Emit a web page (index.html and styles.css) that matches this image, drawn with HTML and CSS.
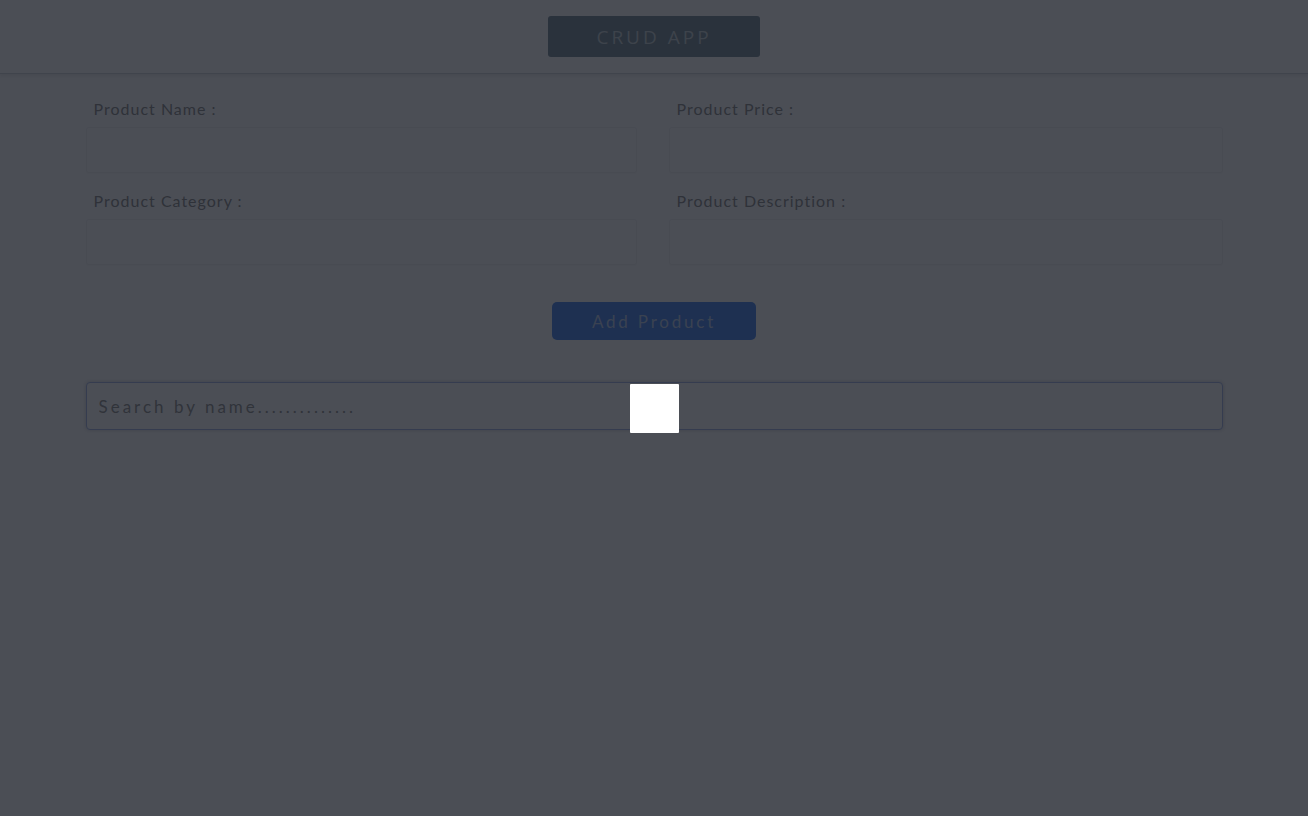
FILE: index.html
```html
<!DOCTYPE html>
<html lang="en">
<head>
<meta charset="utf-8">
<title>CRUD APP</title>
<link rel="stylesheet" href="styles.css">
</head>
<body>
<header class="topbar">
  <div class="brand">CRUD APP</div>
</header>
<main class="container">
  <form class="product-form">
    <div class="field">
      <label class="field-label">Product Name :</label>
      <input class="field-input" type="text">
    </div>
    <div class="field">
      <label class="field-label">Product Price :</label>
      <input class="field-input" type="text">
    </div>
    <div class="field">
      <label class="field-label">Product Category :</label>
      <input class="field-input" type="text">
    </div>
    <div class="field">
      <label class="field-label">Product Description :</label>
      <input class="field-input" type="text">
    </div>
  </form>
  <div class="actions">
    <button class="add-btn" type="button">Add Product</button>
  </div>
  <input class="search" type="text" placeholder="Search by name..............">
</main>
<div class="backdrop">
  <div class="modal-box"></div>
</div>
</body>
</html>
```

FILE: styles.css
```css
* { box-sizing: border-box; }
html, body { margin: 0; padding: 0; }
body {
  background: #ffffff;
  font-family: Lato, "Noto Sans", sans-serif;
  color: #6e6e6e;
  height: 816px;
  overflow: hidden;
}
.topbar {
  display: flex;
  justify-content: center;
  padding: 16px 0;
  border-bottom: 1px solid #c9ccd2;
  box-shadow: 0 2px 4px rgba(0,0,0,0.12);
}
.brand {
  width: 212px;
  height: 41px;
  display: flex;
  align-items: center;
  justify-content: center;
  background: #5a7282;
  color: #b9c6cc;
  border-radius: 3px;
  font-family: "Open Sans", sans-serif;
  font-size: 19px;
  letter-spacing: 3px;
}
.container {
  width: 1137px;
  margin: 0 auto;
}
.product-form {
  display: grid;
  grid-template-columns: 551px 1fr;
  column-gap: 32px;
  row-gap: 18px;
  padding-top: 25px;
}
.field { display: flex; flex-direction: column; }
.field-label {
  padding-left: 8px;
  font-size: 16px;
  line-height: 20px;
  letter-spacing: 1px;
  margin-bottom: 8px;
  color: #727272;
}
.field-input {
  height: 46px;
  border: 1px solid #ededf0;
  border-radius: 3px;
  background: #ffffff;
  box-shadow: 0 1px 3px rgba(0,0,0,0.04);
}
.actions {
  display: flex;
  justify-content: center;
  padding-top: 37px;
}
.add-btn {
  width: 204px;
  height: 38px;
  border: none;
  border-radius: 5px;
  background: #1e6ae8;
  color: #a9c0e8;
  font-family: Lato, "Noto Sans", sans-serif;
  font-size: 17px;
  letter-spacing: 2.8px;
}
.search {
  display: block;
  width: 100%;
  height: 48px;
  margin-top: 42px;
  padding: 0 12px;
  border: 1px solid #8fa6e0;
  border-radius: 4px;
  font-family: Lato, "Noto Sans", sans-serif;
  font-size: 17px;
  letter-spacing: 3px;
  box-shadow: 0 0 4px rgba(0,0,40,0.25);
}
.search::placeholder { color: #7a7a7a; }
.backdrop {
  position: fixed;
  inset: 0;
  background: rgba(30, 34, 42, 0.8);
  display: flex;
  align-items: center;
  justify-content: center;
}
.modal-box {
  width: 49px;
  height: 49px;
  background: #ffffff;
  border-radius: 1px;
}
```
